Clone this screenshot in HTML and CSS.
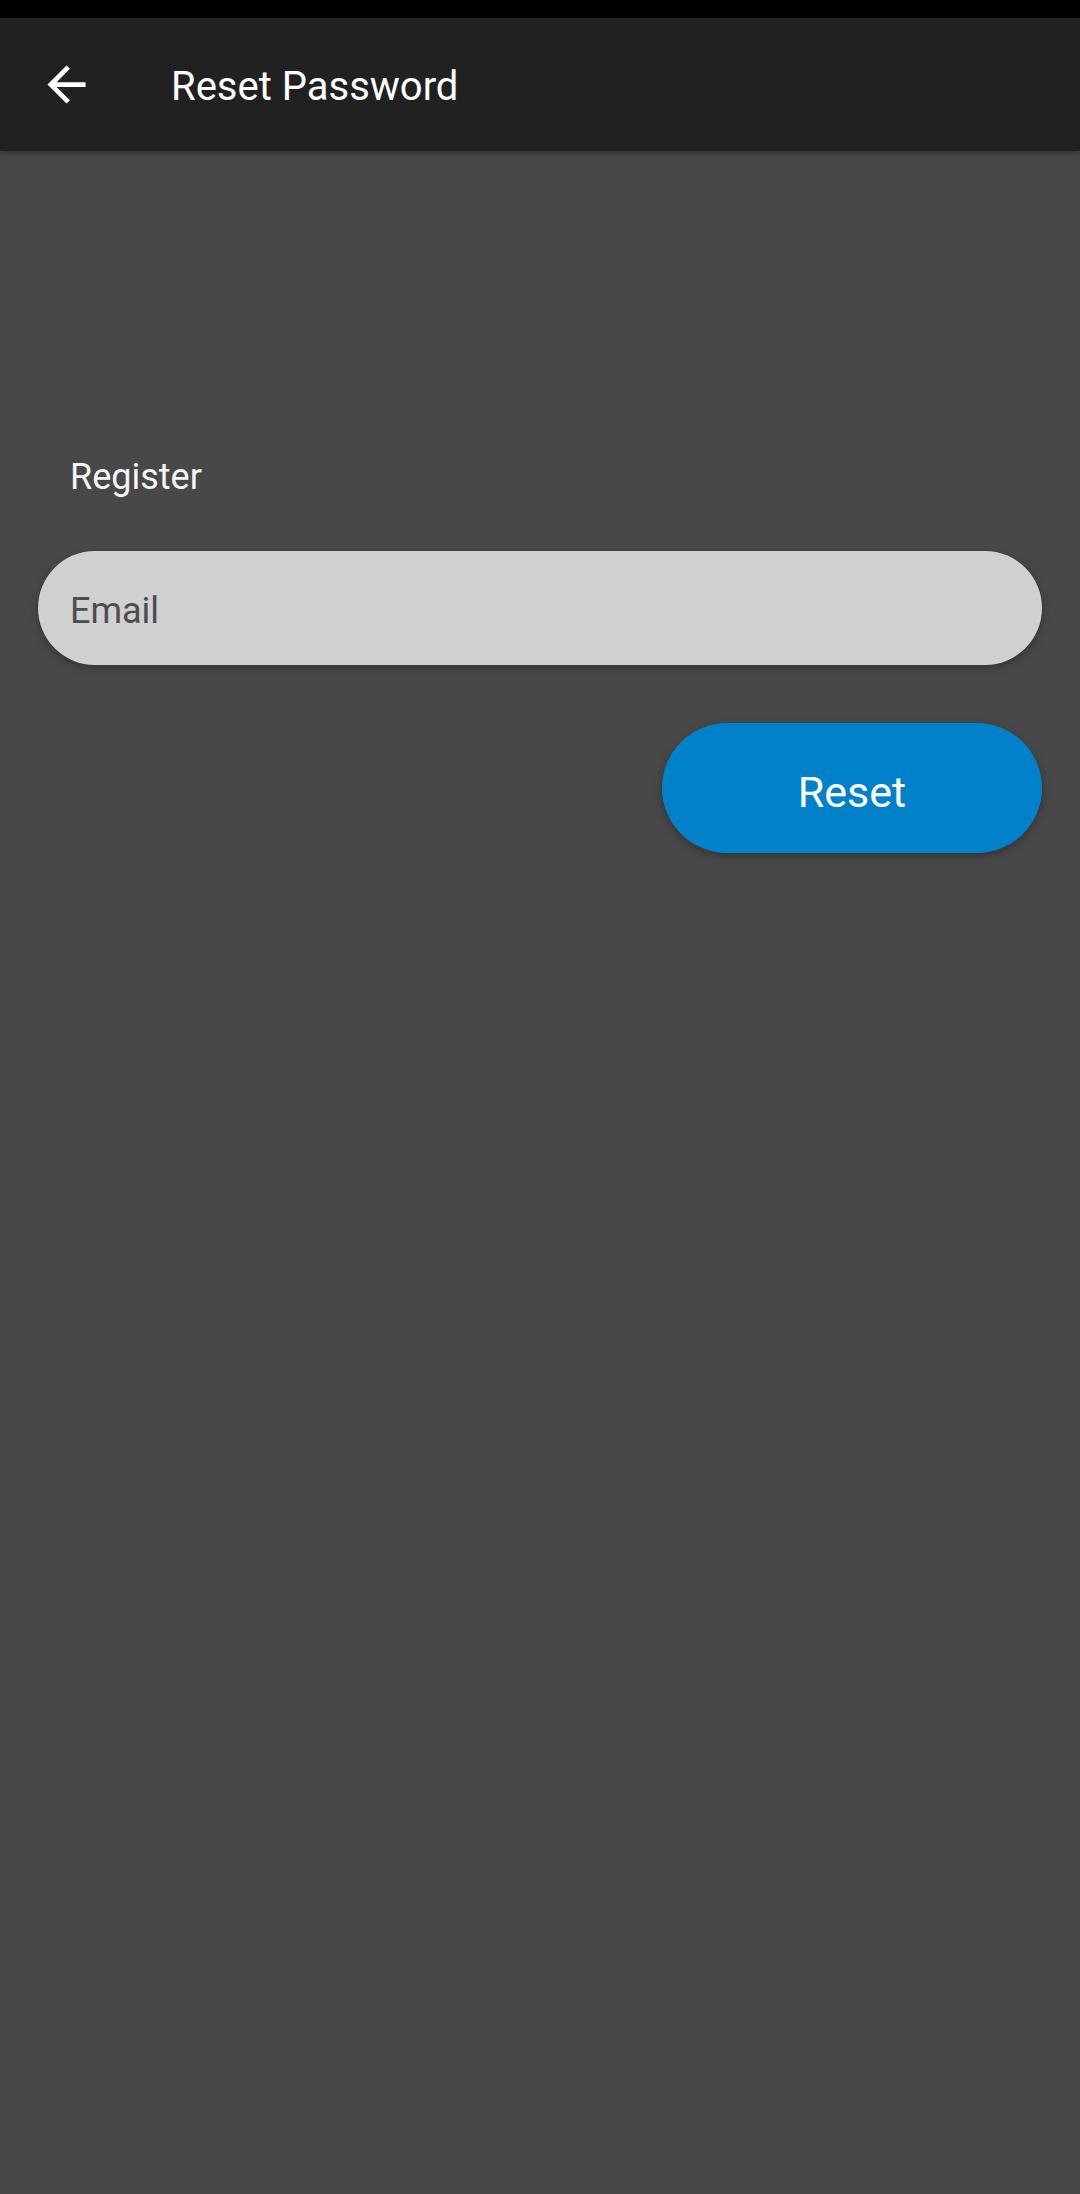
FILE: index.html
```html
<!DOCTYPE html>
<html>
<head>
<meta charset="utf-8">
<title>Reset Password</title>
<link rel="stylesheet" href="styles.css">
</head>
<body>
<div class="status-bar"></div>
<header class="app-bar">
  <button class="nav-btn" aria-label="Back">
    <svg viewBox="0 0 24 24" width="57" height="57"><path d="M20 11H7.83l5.59-5.59L12 4l-8 8 8 8 1.41-1.41L7.83 13H20v-2z" fill="#ffffff"/></svg>
  </button>
  <h1 class="title">Reset Password</h1>
</header>
<main class="content">
  <div class="label">Register</div>
  <div class="field"><span class="hint">Email</span></div>
  <div class="actions">
    <button class="reset-btn">Reset</button>
  </div>
</main>
</body>
</html>
```
FILE: styles.css
```css
html, body {
  margin: 0;
  padding: 0;
}
body {
  background: #484848;
  font-family: Roboto, "Noto Sans", sans-serif;
  width: 1080px;
  min-height: 2194px;
}
.status-bar {
  height: 18px;
  background: #000000;
}
.app-bar {
  height: 133px;
  background: #212121;
  display: flex;
  align-items: center;
  box-shadow: 0 2px 6px rgba(0,0,0,0.35);
  position: relative;
}
.nav-btn {
  margin-left: 38px;
  width: 57px;
  height: 57px;
  padding: 0;
  border: 0;
  background: none;
  display: flex;
}
.title {
  margin: 0 0 0 76px;
  padding-top: 4px;
  font-size: 40px;
  font-weight: 400;
  color: #ffffff;
  line-height: 48px;
}
.content {
  padding: 0 38px;
}
.label {
  margin-top: 304px;
  padding-left: 32px;
  font-size: 36px;
  line-height: 44px;
  color: #f5f5f5;
}
.field {
  margin-top: 52px;
  height: 114px;
  border-radius: 57px;
  background: #d0d0d0;
  box-shadow: 0 3px 8px rgba(0,0,0,0.3);
  display: flex;
  align-items: center;
  padding: 6px 32px 0;
  box-sizing: border-box;
}
.hint {
  font-size: 36px;
  line-height: 44px;
  color: #4d4d4d;
}
.actions {
  display: flex;
  justify-content: flex-end;
  margin-top: 58px;
}
.reset-btn {
  width: 380px;
  height: 130px;
  border: 0;
  border-radius: 65px;
  background: #0281cb;
  color: #ffffff;
  font-family: Roboto, "Noto Sans", sans-serif;
  font-size: 43px;
  line-height: 50px;
  padding: 7px 0 0;
  box-shadow: 0 3px 8px rgba(0,0,0,0.3);
}
```
